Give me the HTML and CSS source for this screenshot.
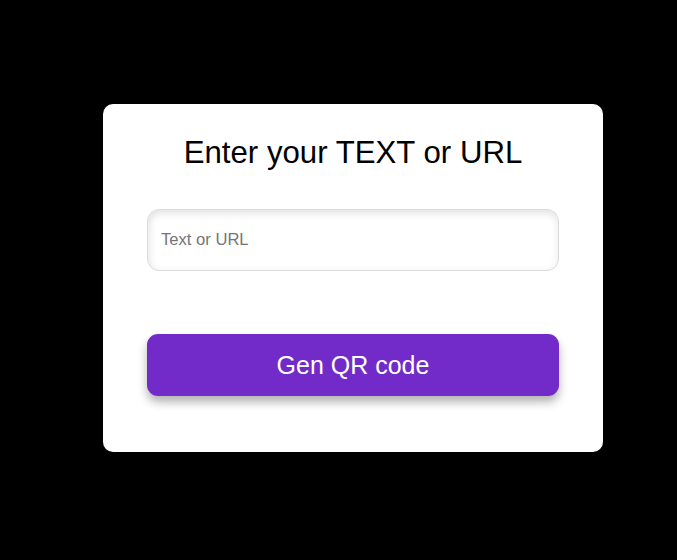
FILE: index.html
```html
<!DOCTYPE html>
<html lang="en">
<head>
<meta charset="utf-8">
<title>QR Generator</title>
<link rel="stylesheet" href="styles.css">
</head>
<body>
<main class="page">
  <div class="card">
    <h1 class="title">Enter your TEXT or URL</h1>
    <input class="field" type="text" placeholder="Text or URL">
    <button class="btn" type="button">Gen QR code</button>
  </div>
</main>
</body>
</html>
```

FILE: styles.css
```css
html, body {
  margin: 0;
  padding: 0;
  background: #000;
  font-family: "Liberation Sans", Arial, sans-serif;
}
.page {
  min-height: 560px;
  box-sizing: border-box;
  padding-top: 104px;
  padding-left: 103px;
}
.card {
  width: 500px;
  height: 348px;
  box-sizing: border-box;
  background: #fff;
  border-radius: 10px;
  padding: 31px 44px 0;
  display: flex;
  flex-direction: column;
}
.title {
  margin: 0;
  font-size: 31.2px;
  line-height: 36px;
  font-weight: normal;
  text-align: center;
  color: #000;
}
.field {
  margin-top: 38px;
  height: 62px;
  box-sizing: border-box;
  border: 1px solid #dcdcdc;
  border-radius: 12px;
  padding: 0 13px;
  font-family: inherit;
  font-size: 16.6px;
  box-shadow: inset 1px 3px 8px rgba(0,0,0,0.12);
  outline: none;
}
.field::placeholder { color: #757575; }
.btn {
  margin-top: 63px;
  height: 62px;
  border: none;
  border-radius: 11px;
  background: #722bc8;
  color: #fff;
  font-family: inherit;
  font-size: 25px;
  box-shadow: 0 6px 10px rgba(0,0,0,0.3);
  cursor: pointer;
}
```
